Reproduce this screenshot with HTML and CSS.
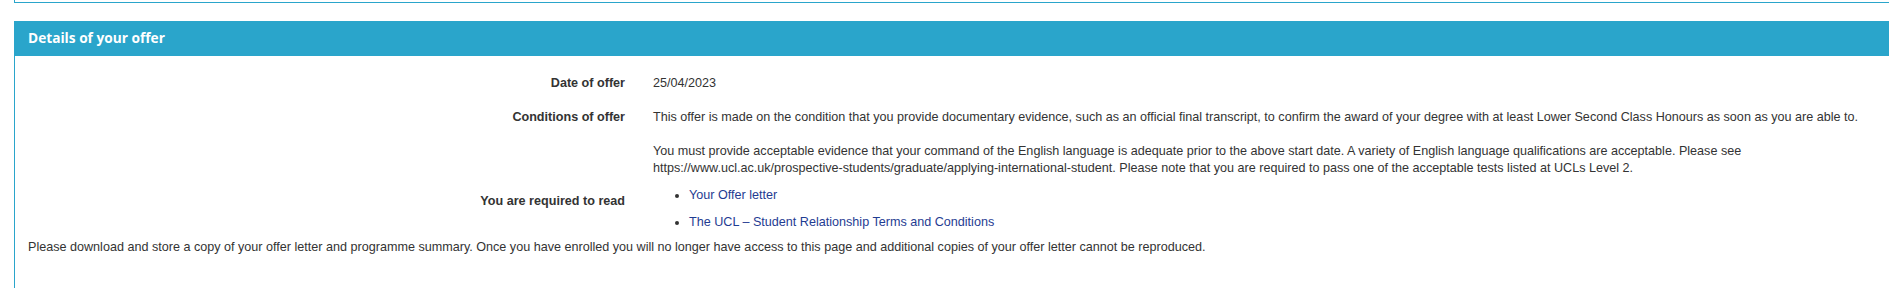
FILE: index.html
```html
<!DOCTYPE html>
<html lang="en">
<head>
<meta charset="utf-8">
<title>Details of your offer</title>
<link rel="stylesheet" href="styles.css">
</head>
<body>
<div class="page">
  <div class="prev-panel"></div>
  <section class="panel">
    <header class="panel-heading">Details of your offer</header>
    <div class="panel-body">
      <div class="row">
        <div class="row-label">Date of offer</div>
        <div class="row-value">25/04/2023</div>
      </div>
      <div class="row">
        <div class="row-label">Conditions of offer</div>
        <div class="row-value">
          <p>This offer is made on the condition that you provide documentary evidence, such as an official final transcript, to confirm the award of your degree with at least Lower Second Class Honours as soon as you are able to.</p>
          <p>You must provide acceptable evidence that your command of the English language is adequate prior to the above start date. A variety of English language qualifications are acceptable. Please see https://www.ucl.ac.uk/prospective-students/graduate/applying-international-student. Please note that you are required to pass one of the acceptable tests listed at UCLs Level 2.</p>
        </div>
      </div>
      <div class="row row-tight">
        <div class="row-label row-label-offset">You are required to read</div>
        <div class="row-value">
          <ul class="links">
            <li><a href="#">Your Offer letter</a></li>
            <li><a href="#">The UCL – Student Relationship Terms and Conditions</a></li>
          </ul>
        </div>
      </div>
      <p class="note">Please download and store a copy of your offer letter and programme summary. Once you have enrolled you will no longer have access to this page and additional copies of your offer letter cannot be reproduced.</p>
    </div>
  </section>
</div>
</body>
</html>
```

FILE: styles.css
```css
html, body {
  margin: 0;
  padding: 0;
  background: #ffffff;
}

body {
  font-family: "Liberation Sans", Arial, sans-serif;
  font-size: 12.6px;
  line-height: 17px;
  color: #333333;
  overflow: hidden;
}

.page {
  padding-left: 14px;
}

.prev-panel {
  height: 2px;
  border-left: 1px solid #2aa5cb;
  border-bottom: 1px solid #2aa5cb;
  margin-bottom: 18px;
}

.panel {
  border-left: 1px solid #2aa5cb;
  min-height: 300px;
}

.panel-heading {
  background: #2aa5cb;
  color: #ffffff;
  font-family: "Open Sans", "Liberation Sans", sans-serif;
  font-weight: 700;
  font-size: 13.7px;
  line-height: 19px;
  padding: 7px 13px 9px 14px;
  margin-left: -1px;
}

.panel-body {
  padding: 19px 13px 40px;
}

.row {
  display: flex;
  align-items: flex-start;
}

.row + .row {
  margin-top: 17px;
}

.row.row-tight {
  margin-top: 10px;
}

.row-label {
  flex: 0 0 597px;
  text-align: right;
  font-weight: 700;
}

.row-label-offset {
  padding-top: 6px;
}

.row-value {
  flex: 1 1 auto;
  padding-left: 28px;
}

.row-value p {
  margin: 0 0 17px;
}

.row-value p:last-child {
  margin-bottom: 0;
}

.links {
  margin: 0;
  padding-left: 36px;
}

.links li + li {
  margin-top: 10px;
}

.links a {
  color: #1f3c92;
  text-decoration: none;
}

.note {
  margin: 8px 0 0;
}
```
